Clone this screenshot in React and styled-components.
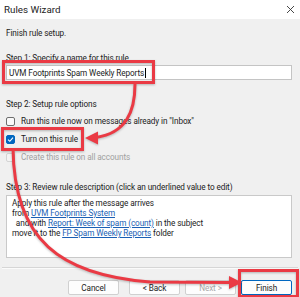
import React from 'react';
import styled, {createGlobalStyle} from 'styled-components';

const GlobalStyle = createGlobalStyle`
    html, body {
        margin: 0;
        padding: 0;
    }
    body {
        width: 300px;
        height: 297px;
        overflow: hidden;
        background: #f0f0f0;
        font-family: Roboto, "Noto Sans", sans-serif;
    }
`

const RED = '#ea3a44';

const Window = styled.div`
    position: relative;
    width: 300px;
    height: 297px;
    display: flex;
    flex-direction: column;
    background: #f0f0f0;
    color: #1b1b1b;
    font-size: 8.2px;
    letter-spacing: -0.1px;
    line-height: 12px;
    overflow: hidden;
`

const TitleBar = styled.div`
    height: 19px;
    flex: none;
    background: #ffffff;
    display: flex;
    align-items: center;
    justify-content: space-between;
    padding: 0 5px 0 4px;
    font-size: 9.8px;
    letter-spacing: 0;
    color: #222;
`

const Body = styled.div`
    flex: 1;
    display: flex;
    flex-direction: column;
    padding: 8px 8px 0 6px;
`

const Text = styled.div`
    margin-top: ${props => props.gap || 0}px;
    white-space: nowrap;
`

const TextBox = styled.div`
    margin-top: 1px;
    height: 13px;
    background: #fff;
    border: 1px solid #c4c4c4;
    padding: 0 2px;
    display: flex;
    align-items: center;
    white-space: nowrap;
`

const Caret = styled.span`
    display: inline-block;
    width: 1px;
    height: 10px;
    background: #000;
    margin-left: 1px;
`

const Options = styled.div`
    margin-top: 2px;
    display: flex;
    flex-direction: column;
`

const Row = styled.label`
    height: 18px;
    display: flex;
    align-items: center;
    gap: 6px;
    color: ${props => props.disabled ? '#a0a0a0' : 'inherit'};
    white-space: nowrap;
`

const Box = styled.span`
    width: 9px;
    height: 9px;
    flex: none;
    box-sizing: border-box;
    border-radius: 2px;
    border: 1px solid ${props => props.checked ? '#0067c0' : props.disabled ? '#d4d4d4' : '#6e6e6e'};
    background: ${props => props.checked ? '#0067c0' : props.disabled ? '#f4f4f4' : '#fafafa'};
    display: flex;
    align-items: center;
    justify-content: center;
`

const Description = styled.div`
    margin-top: 2px;
    height: 57px;
    background: #fff;
    border: 1px solid #c9c9c9;
    padding: 2px 5px;
    line-height: 10px;
    white-space: pre;
`

const Link = styled.span`
    color: #1a5fb4;
    text-decoration: underline;
    text-underline-offset: 1px;
`

const Separator = styled.div`
    margin: 9px -6px 0 -4px;
    height: 1px;
    background: #d6d6d6;
    border-bottom: 1px solid #fbfbfb;
`

const Buttons = styled.div`
    margin-top: 11px;
    display: flex;
    justify-content: flex-end;
    gap: 5px;
`

const Button = styled.div`
    width: 51px;
    height: 15px;
    box-sizing: border-box;
    border-radius: 2px;
    background: #fdfdfd;
    border: ${props => props.primary ? '1.5px solid #0067c0' : '1px solid #d0d0d0'};
    color: ${props => props.disabled ? '#a8a8a8' : '#1b1b1b'};
    display: flex;
    align-items: center;
    justify-content: center;
    margin-right: ${props => props.space || 0}px;
`

const Overlay = styled.svg`
    position: absolute;
    left: 0;
    top: 0;
    width: 300px;
    height: 297px;
    pointer-events: none;
    filter: drop-shadow(0 1px 1px rgba(0, 0, 0, 0.25));
`

const Check = () =>
    <svg width="7" height="7" viewBox="0 0 7 7">
        <path d="M1 3.6 L2.8 5.3 L6 1.6" fill="none" stroke="#fff" strokeWidth="1.1"/>
    </svg>;

const Close = () =>
    <svg width="9" height="9" viewBox="0 0 9 9">
        <path d="M1 1 L8 8 M8 1 L1 8" stroke="#333" strokeWidth="0.9"/>
    </svg>;

const Annotations = () =>
    <Overlay viewBox="0 0 300 297">
        <g fill="none" stroke={RED} strokeWidth="3">
            <rect x="3.5" y="61.5" width="150" height="21"/>
            <rect x="2.5" y="128.5" width="80" height="21"/>
            <rect x="239.5" y="270.5" width="58" height="26"/>
            <path d="M135 84 C135 112 126 133 96 137.5"/>
            <path d="M13 148 C14 240 60 275 150 282 L230 282.5"/>
        </g>
        <g fill={RED}>
            <path d="M85 138 L98 131.5 L98 144.5 Z"/>
            <path d="M242 282.5 L229 276 L229 289 Z"/>
        </g>
    </Overlay>;

export default function App() {
    return (
        <Window>
            <GlobalStyle/>
            <TitleBar>
                <span>Rules Wizard</span>
                <Close/>
            </TitleBar>
            <Body>
                <Text>Finish rule setup.</Text>
                <Text gap={13}>Step 1: Specify a name for this rule</Text>
                <TextBox>UVM Footprints Spam Weekly Reports<Caret/></TextBox>
                <Text gap={18}>Step 2: Setup rule options</Text>
                <Options>
                    <Row><Box/>Run this rule now on messages already in "Inbox"</Row>
                    <Row><Box checked><Check/></Box>Turn on this rule</Row>
                    <Row disabled><Box disabled/>Create this rule on all accounts</Row>
                </Options>
                <Text gap={15}>Step 3: Review rule description (click an underlined value to edit)</Text>
                <Description>
                    <div>Apply this rule after the message arrives</div>
                    <div>from <Link>UVM Footprints System</Link></div>
                    <div>  and with <Link>Report: Week of spam (count)</Link> in the subject</div>
                    <div>move it to the <Link>FP Spam Weekly Reports</Link> folder</div>
                </Description>
                <Separator/>
                <Buttons>
                    <Button space={5}>Cancel</Button>
                    <Button>&lt; Back</Button>
                    <Button disabled>Next &gt;</Button>
                    <Button primary>Finish</Button>
                </Buttons>
            </Body>
            <Annotations/>
        </Window>
    );
}
